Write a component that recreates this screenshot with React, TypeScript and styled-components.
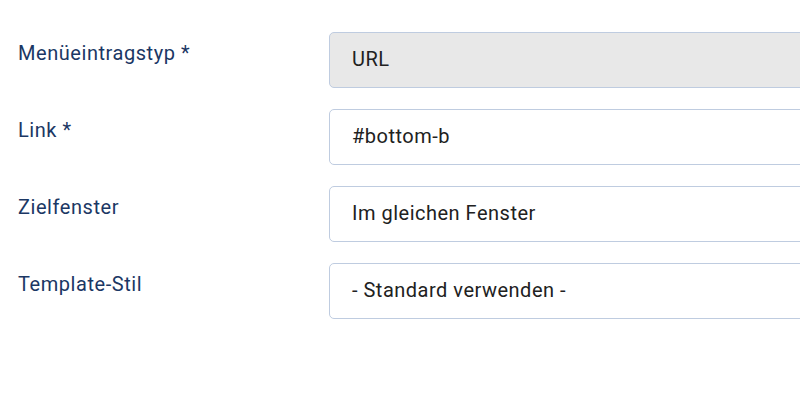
import React from "react";
import styled, { createGlobalStyle } from "styled-components";

const Global = createGlobalStyle`
  html, body { margin: 0; padding: 0; background: #fff; overflow: hidden; }
  body { font-family: Roboto, "Noto Sans", sans-serif; }
`;

const Form = styled.div`
  display: flex;
  flex-direction: column;
  gap: 21px;
  padding: 32px 0 0 18px;
  width: 1000px;
`;

const Row = styled.div`
  display: grid;
  grid-template-columns: 311px 520px;
  align-items: start;
`;

const Label = styled.label`
  padding-top: 8px;
  font-size: 20px;
  line-height: 27px;
  letter-spacing: 0.55px;
  color: #1b3764;
`;

const Field = styled.div<{ $readonly?: boolean }>`
  box-sizing: border-box;
  height: 56px;
  display: flex;
  align-items: center;
  padding: 0 22px 3px;
  border: 1px solid #bfcce0;
  border-radius: 5px;
  background: ${(p) => (p.$readonly ? "#e8e8e8" : "#fff")};
  font-size: 20px;
  letter-spacing: 0.5px;
  color: #212121;
`;

const rows = [
  { label: "Menüeintragstyp *", value: "URL", readonly: true },
  { label: "Link *", value: "#bottom-b" },
  { label: "Zielfenster", value: "Im gleichen Fenster" },
  { label: "Template-Stil", value: "- Standard verwenden -" },
];

export default function App() {
  return (
    <>
      <Global />
      <Form>
        {rows.map((r) => (
          <Row key={r.label}>
            <Label>{r.label}</Label>
            <Field $readonly={r.readonly}>{r.value}</Field>
          </Row>
        ))}
      </Form>
    </>
  );
}
